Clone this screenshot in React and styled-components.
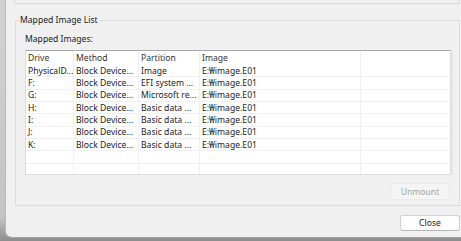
import React from 'react'
import styled, { createGlobalStyle } from 'styled-components'

const GlobalStyle = createGlobalStyle`
  html, body {
    margin: 0;
    padding: 0;
    background: #c6c6c6;
  }
  body {
    font-family: "Noto Sans", "Noto Sans CJK KR", sans-serif;
    font-size: 8.6px;
    color: #1b1b1b;
  }
`

const columns = ['Drive', 'Method', 'Partition', 'Image', '']

const images = [
  { drive: 'PhysicalD...', method: 'Block Device...', partition: 'Image', image: 'E:₩image.E01' },
  { drive: 'F:', method: 'Block Device...', partition: 'EFI system ...', image: 'E:₩image.E01' },
  { drive: 'G:', method: 'Block Device...', partition: 'Microsoft re...', image: 'E:₩image.E01' },
  { drive: 'H:', method: 'Block Device...', partition: 'Basic data ...', image: 'E:₩image.E01' },
  { drive: 'I:', method: 'Block Device...', partition: 'Basic data ...', image: 'E:₩image.E01' },
  { drive: 'J:', method: 'Block Device...', partition: 'Basic data ...', image: 'E:₩image.E01' },
  { drive: 'K:', method: 'Block Device...', partition: 'Basic data ...', image: 'E:₩image.E01' },
]

const App = () => (
  <>
    <GlobalStyle />
    <Screen>
      <Window>
        <Content>
          <TopBox />
          <GroupBox>
            <Legend>Mapped Image List</Legend>
            <Label>Mapped Images:</Label>
            <ListView>
              <Row header>
                {columns.map((c, i) => (
                  <Cell key={i}>{c}</Cell>
                ))}
              </Row>
              {images.map((img) => (
                <Row key={img.drive}>
                  <Cell>{img.drive}</Cell>
                  <Cell>{img.method}</Cell>
                  <Cell>{img.partition}</Cell>
                  <Cell>{img.image}</Cell>
                  <Cell />
                </Row>
              ))}
              <Row><Cell /><Cell /><Cell /><Cell /><Cell /></Row>
              <Row><Cell /><Cell /><Cell /><Cell /><Cell /></Row>
            </ListView>
            <ButtonRow inset>
              <Button disabled>Unmount</Button>
            </ButtonRow>
          </GroupBox>
          <ButtonRow>
            <Button>Close</Button>
          </ButtonRow>
        </Content>
      </Window>
    </Screen>
  </>
)

const Screen = styled.div`
  width: 461px;
  height: 241px;
  overflow: hidden;
  padding: 0 0 3px 5px;
  box-sizing: border-box;
  background: linear-gradient(to bottom, #d2d2d2 0%, #c4c4c4 90%, #8c8c8c 100%);
`

const Window = styled.div`
  height: 238px;
  box-sizing: border-box;
  background: #f0f0f0;
  border-left: 1px solid #b9b9b9;
  border-bottom: 1px solid #a2a2a2;
  border-bottom-left-radius: 7px;
  padding-left: 8px;
`

const Content = styled.div`
  width: 446px;
  display: flex;
  flex-direction: column;
`

const TopBox = styled.div`
  height: 4px;
  box-sizing: border-box;
  border: 1px solid #dadada;
  border-top: none;
`

const GroupBox = styled.fieldset`
  margin: 10px 0 0 1px;
  padding: 0 0 5px 0;
  min-width: 0;
  width: 445px;
  box-sizing: border-box;
  border: 1px solid #dcdcdc;
  display: flex;
  flex-direction: column;
`

const Legend = styled.legend`
  margin-left: 3px;
  padding: 0 1px;
  line-height: 12px;
  color: #1b1b1b;
`

const Label = styled.div`
  margin: 7px 0 0 9px;
  line-height: 12px;
`

const ListView = styled.div`
  margin: 5px 0 0 9px;
  width: 426px;
  height: 125px;
  box-sizing: border-box;
  overflow: hidden;
  background: #ffffff;
  border: 1px solid #dcdcdc;
  border-top-color: #a9a9b0;
  box-shadow: 2px 0 0 #e6e6e6;
`

const Row = styled.div`
  display: grid;
  grid-template-columns: 48px 65px 61px 161px 1fr;
  height: ${(p) => (p.header ? '14px' : '12.33px')};
  box-sizing: border-box;
  border-bottom: ${(p) => (p.header ? 'none' : '1px solid #f0f0f0')};
  color: ${(p) => (p.header ? '#333333' : '#1b1b1b')};
`

const Cell = styled.div`
  display: flex;
  align-items: center;
  padding-left: 2px;
  white-space: nowrap;
  overflow: hidden;
  border-right: 1px solid #f0f0f0;
  &:last-child {
    border-right: none;
  }
`

const ButtonRow = styled.div`
  display: flex;
  justify-content: flex-end;
  margin-top: ${(p) => (p.inset ? '8px' : '9px')};
  padding-right: ${(p) => (p.inset ? '9px' : '0')};
`

const Button = styled.button`
  width: 60px;
  height: ${(p) => (p.disabled ? '17px' : '16px')};
  box-sizing: border-box;
  padding: 0;
  font: inherit;
  border-radius: 3px;
  background: ${(p) => (p.disabled ? '#f5f5f5' : '#fdfdfd')};
  color: ${(p) => (p.disabled ? '#a3a3a3' : '#1b1b1b')};
  border: 1px solid ${(p) => (p.disabled ? '#e9e9e9' : '#d0d0d0')};
  border-bottom-color: ${(p) => (p.disabled ? '#e9e9e9' : '#b5b5b5')};
`

export default App
